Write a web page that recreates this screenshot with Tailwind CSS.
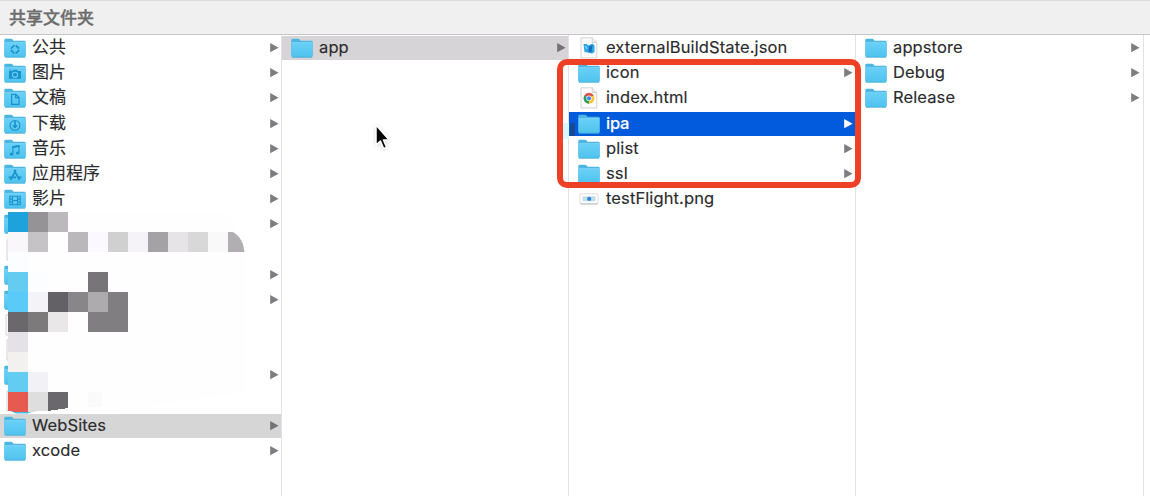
<!DOCTYPE html>
<html lang="zh-CN">
<head>
<meta charset="utf-8">
<title>共享文件夹</title>
<script src="https://cdn.jsdelivr.net/npm/@tailwindcss/browser@4"></script>
</head>
<body class="relative flex h-[496px] w-[1150px] flex-col overflow-hidden bg-white font-['Inter','Noto_Sans_CJK_SC',sans-serif] text-[16.5px] leading-6 tracking-[0.11px] text-[#2b2b2d]">
<svg class="absolute size-0" aria-hidden="true">
  <defs>
    <linearGradient id="fg" x1="0" y1="0" x2="0" y2="1"><stop offset="0" stop-color="#6ad0f7"/><stop offset="1" stop-color="#4ec3ee"/></linearGradient>
    <symbol id="folder" viewBox="0 0 22 20">
      <path d="M0.3 18V2.2Q0.3 0.8 1.6 0.8H7.2Q8 0.8 8.6 1.5L9.6 2.7H20.4Q21.7 2.7 21.7 4V18Z" fill="#4ab5df"/>
      <path d="M0.5 4.6H21.5V18.2Q21.5 19.2 20.5 19.2H1.5Q0.5 19.2 0.5 18.2Z" fill="url(#fg)"/>
      <path d="M0.6 4.4H21.4" stroke="#86dafa" stroke-width=".7"/>
      <path d="M0.8 19.2H21.2" stroke="#42a9d1" stroke-width=".8"/>
    </symbol>
    <symbol id="arrow" viewBox="0 0 9 10"><path d="M0.2 0.1V9.300L8.600 4.700Z" fill="currentColor"/></symbol>
    <symbol id="doc" viewBox="0 0 22 22">
      <path d="M3 .8H14.2L18.8 5.4V21H3Z" fill="#fbfbfb" stroke="#c3c3c3" stroke-width=".7"/>
      <path d="M14.2 .8V5.4H18.8" fill="#ececec" stroke="#c3c3c3" stroke-width=".7"/>
    </symbol>
  </defs>
</svg>

<header class="flex h-[35px] shrink-0 items-center border-t border-b border-t-[#dcdcdc] border-b-[#c6c6c6] bg-[#f0f0f0] pl-[9px] text-[17px] font-medium tracking-normal text-[#6c6c6c] [-webkit-text-stroke:0.35px_#6c6c6c]">共享文件夹</header>

<main class="flex min-h-0 flex-1 [&_span]:pb-0.5 [-webkit-text-stroke:0.15px_currentColor]">
  <!-- shared folders -->
  <section class="relative flex w-[282px] shrink-0 flex-col gap-[1.2px] border-r border-[#e2e2e2] pt-px text-[#2b2b2d]">
    <div class="flex h-6 shrink-0 items-center gap-1.5 pr-[2px] pl-1"><svg class="h-5 w-[22px]" viewBox="0 0 22 20"><use href="#folder"/><path d="M11 6.6 15.8 11.4 11 16.2 6.2 11.4Z" fill="none" stroke="#1a93cc" stroke-width="1.7" stroke-dasharray="4.8 2" stroke-dashoffset="-1"/></svg><span class="flex-1 text-[17px] tracking-normal">公共</span><svg class="h-2.5 w-[9px] text-[#7e7c80]"><use href="#arrow"/></svg></div>
    <div class="flex h-6 shrink-0 items-center gap-1.5 pr-[2px] pl-1"><svg class="h-5 w-[22px]" viewBox="0 0 22 20"><use href="#folder"/><path d="M5 8H8.2L9.2 6.8H13L14 8H17V15.8H5Z" fill="#1a93cc"/><circle cx="11" cy="11.8" r="2.6" fill="#1a93cc" stroke="#6bd0f6" stroke-width="1.1"/><path d="M5.5 7H7.2" stroke="#1a93cc"/></svg><span class="flex-1 text-[17px] tracking-normal">图片</span><svg class="h-2.5 w-[9px] text-[#7e7c80]"><use href="#arrow"/></svg></div>
    <div class="flex h-6 shrink-0 items-center gap-1.5 pr-[2px] pl-1"><svg class="h-5 w-[22px]" viewBox="0 0 22 20"><use href="#folder"/><path d="M7.6 6.3H11.8L15 9.5V16.4H7.6ZM11.6 6.3V9.7H15" fill="none" stroke="#1a93cc" stroke-width="1.2"/></svg><span class="flex-1 text-[17px] tracking-normal">文稿</span><svg class="h-2.5 w-[9px] text-[#7e7c80]"><use href="#arrow"/></svg></div>
    <div class="flex h-6 shrink-0 items-center gap-1.5 pr-[2px] pl-1"><svg class="h-5 w-[22px]" viewBox="0 0 22 20"><use href="#folder"/><circle cx="11" cy="11.4" r="4.9" fill="none" stroke="#1a93cc" stroke-width="1.1"/><path d="M11 7V14" stroke="#1a93cc" stroke-width="1.7"/><path d="M8 11.2H14L11 14.6Z" fill="#1a93cc"/></svg><span class="flex-1 text-[17px] tracking-normal">下载</span><svg class="h-2.5 w-[9px] text-[#7e7c80]"><use href="#arrow"/></svg></div>
    <div class="flex h-6 shrink-0 items-center gap-1.5 pr-[2px] pl-1"><svg class="h-5 w-[22px]" viewBox="0 0 22 20"><use href="#folder"/><path d="M8.9 15V7.8L15 6.6V13.8" fill="none" stroke="#1a93cc" stroke-width="1.1"/><path d="M8.4 7.3 15.5 6V8L8.4 9.3Z" fill="#1a93cc"/><ellipse cx="7.6" cy="15" rx="1.8" ry="1.5" fill="#1a93cc"/><ellipse cx="13.7" cy="13.9" rx="1.8" ry="1.5" fill="#1a93cc"/></svg><span class="flex-1 text-[17px] tracking-normal">音乐</span><svg class="h-2.5 w-[9px] text-[#7e7c80]"><use href="#arrow"/></svg></div>
    <div class="flex h-6 shrink-0 items-center gap-1.5 pr-[2px] pl-1"><svg class="h-5 w-[22px]" viewBox="0 0 22 20"><use href="#folder"/><path d="M10 6 15.5 16M12 6 6.5 16M4.6 13.4H12M14 13.4H17.4" fill="none" stroke="#1a93cc" stroke-width="1.6"/></svg><span class="flex-1 text-[17px] tracking-normal">应用程序</span><svg class="h-2.5 w-[9px] text-[#7e7c80]"><use href="#arrow"/></svg></div>
    <div class="flex h-6 shrink-0 items-center gap-1.5 pr-[2px] pl-1"><svg class="h-5 w-[22px]" viewBox="0 0 22 20"><use href="#folder"/><path d="M5.8 7.3H16.2V15.8H5.8ZM8.5 7.3V15.8M13.5 7.3V15.8M8.5 11.5H13.5M5.8 10.1H8.5M5.8 13H8.5M13.5 10.1H16.2M13.5 13H16.2" fill="none" stroke="#1a93cc" stroke-width="1.1"/></svg><span class="flex-1 text-[17px] tracking-normal">影片</span><svg class="h-2.5 w-[9px] text-[#7e7c80]"><use href="#arrow"/></svg></div>
    <div class="flex h-6 shrink-0 items-center justify-between pr-[2px] pl-1"><svg class="h-5 w-[22px]"><use href="#folder"/></svg><svg class="h-2.5 w-[9px] text-[#7e7c80]"><use href="#arrow"/></svg></div>
    <div class="flex h-6 shrink-0 items-center pl-1"><svg class="h-[22px] w-[22px]"><use href="#doc"/></svg></div>
    <div class="flex h-6 shrink-0 items-center justify-between pr-[2px] pl-1"><svg class="h-5 w-[22px]"><use href="#folder"/></svg><svg class="h-2.5 w-[9px] text-[#7e7c80]"><use href="#arrow"/></svg></div>
    <div class="flex h-6 shrink-0 items-center justify-between pr-[2px] pl-1"><svg class="h-5 w-[22px]"><use href="#folder"/></svg><svg class="h-2.5 w-[9px] text-[#7e7c80]"><use href="#arrow"/></svg></div>
    <div class="flex h-6 shrink-0 items-center pl-[3px]"><svg class="h-[22px] w-[22px]"><use href="#doc"/></svg></div>
    <div class="flex h-6 shrink-0 items-center pl-1"><svg class="h-[22px] w-[22px]"><use href="#doc"/></svg></div>
    <div class="flex h-6 shrink-0 items-center justify-between pr-[2px] pl-1"><svg class="h-5 w-[22px]"><use href="#folder"/></svg><svg class="h-2.5 w-[9px] text-[#7e7c80]"><use href="#arrow"/></svg></div>
    <div class="flex h-6 shrink-0 items-center pl-1"><svg class="h-[22px] w-[22px]"><use href="#doc"/></svg></div>
    <div class="flex h-6 shrink-0 items-center gap-1.5 bg-[#d6d6d6] pr-[2px] pl-1"><svg class="h-5 w-[22px]"><use href="#folder"/></svg><span class="flex-1">WebSites</span><svg class="h-2.5 w-[9px] text-[#737175]"><use href="#arrow"/></svg></div>
    <div class="flex h-6 shrink-0 items-center gap-1.5 pr-[2px] pl-1"><svg class="h-5 w-[22px]"><use href="#folder"/></svg><span class="flex-1">xcode</span><svg class="h-2.5 w-[9px] text-[#7e7c80]"><use href="#arrow"/></svg></div>

    <!-- pixelated cover over private folder names -->
    <svg class="absolute top-[177px] left-2 h-[202px] w-[240px]" viewBox="8 212 240 202" shape-rendering="crispEdges">
      <path d="M8 212H228L245 252V392L110 411.500H8Z" fill="#fefefe"/>
      <path d="M8 212h20v20H8z" fill="#1ea2dc"/><path d="M28 212h20v20H28z" fill="#969396"/><path d="M48 212h20v20H48z" fill="#bbb9bc"/>
      <path d="M8 232h20v20H8z" fill="#f9f7fa"/><path d="M28 232h20v20H28z" fill="#c5c3c6"/><path d="M68 232h20v20H68z" fill="#bbb8bc"/><path d="M88 232h20v20H88z" fill="#fbf9fd"/><path d="M108 232h20v20h-20z" fill="#d0d0d0"/><path d="M128 232h20v20h-20z" fill="#f5f3f7"/><path d="M148 232h20v20h-20z" fill="#a5a2a5"/><path d="M168 232h20v20h-20z" fill="#e6e4e7"/><path d="M188 232h20v20h-20z" fill="#d8d8d8"/><path d="M208 232h20v20h-20z" fill="#f9f9f9"/>
      <path d="M228 232h5q6 3 10 12l1.500 8H228z" fill="#b1afb2" shape-rendering="auto"/>
      <path d="M8 252h20v20H8z" fill="#fcfdff"/><path d="M8 272h20v20H8z" fill="#64cbf1"/><path d="M28 272h20v20H28z" fill="#fcfdff"/><path d="M88 272h20v20H88z" fill="#777577"/>
      <path d="M8 292h20v20H8z" fill="#5acbf8"/><path d="M28 292h20v20H28z" fill="#f4f3f7"/><path d="M48 292h20v20H48z" fill="#636165"/><path d="M68 292h20v20H68z" fill="#888689"/><path d="M88 292h20v20H88z" fill="#adabae"/><path d="M108 292h20v20h-20z" fill="#807e81"/>
      <path d="M8 312h20v20H8z" fill="#6a686b"/><path d="M28 312h20v20H28z" fill="#7c7a7a"/><path d="M48 312h20v20H48z" fill="#e9e7e7"/><path d="M88 312h40v20H88z" fill="#807e81"/>
      <path d="M8 332h20v20H8z" fill="#e4e2e6"/><path d="M8 352h20v20H8z" fill="#f2f1ef"/>
      <path d="M8 372h20v20H8z" fill="#62cdf0"/><path d="M28 372h20v20H28z" fill="#f2f1f5"/>
      <path d="M8 410H36L28 413.500H16Z" fill="#45bce8" shape-rendering="auto"/>
      <path d="M8 392h20v20H16L8 410.500z" fill="#e65a50"/><path d="M28 392h20v18.500l-20 1.500z" fill="#dedede"/><path d="M48 392h20v16l-20 3z" fill="#6a686c"/><path d="M88 392h14v15H88z" fill="#fafafa"/>
    </svg>
  </section>

  <section class="flex w-[287px] shrink-0 flex-col border-r border-[#e2e2e2] pt-px">
    <div class="flex h-6 shrink-0 items-center gap-1.5 bg-[#d6d4d6] pr-[2px] pl-[9px]"><svg class="h-5 w-[22px]"><use href="#folder"/></svg><span class="flex-1">app</span><svg class="h-2.5 w-[9px] text-[#737175]"><use href="#arrow"/></svg></div>
  </section>

  <section class="flex w-[287px] shrink-0 flex-col gap-[1.2px] border-r border-[#e2e2e2] pt-px">
    <div class="flex h-6 shrink-0 items-center gap-1.5 pl-[9px]"><svg class="h-[22px] w-[22px]" viewBox="0 0 22 22"><use href="#doc"/><path d="M5.500 7H8.500L10.500 8.500 14.500 6.500 16.500 8.500V15L14 16.500 9.500 15.500 6.500 15Z" fill="#2ba4e8"/><path d="M11 9.500 14.500 8 13.500 15H10.500Z" fill="#176dba"/><path d="M7.500 9 9 12" stroke="#bce8fb" stroke-width="1"/></svg><span>externalBuildState.json</span></div>
    <div class="flex h-6 shrink-0 items-center gap-1.5 pr-[2px] pl-[9px]"><svg class="h-5 w-[22px]"><use href="#folder"/></svg><span class="flex-1">icon</span><svg class="h-2.5 w-[9px] text-[#7e7c80]"><use href="#arrow"/></svg></div>
    <div class="flex h-6 shrink-0 items-center gap-1.5 pl-[9px]"><svg class="h-[22px] w-[22px]" viewBox="0 0 22 22"><use href="#doc"/><path d="M11 11.300 6.200 8.500A5.500 5.500 0 0 1 15.800 8.500Z" fill="#db5044"/><path d="M11 11.300 15.800 8.500A5.500 5.500 0 0 1 11 16.800Z" fill="#fbc735"/><path d="M11 11.300V16.800A5.500 5.500 0 0 1 6.200 8.500Z" fill="#2c9d58"/><circle cx="11" cy="11.300" r="2.700" fill="#fff"/><circle cx="11" cy="11.300" r="2.100" fill="#4285e8"/></svg><span>index.html</span></div>
    <div class="flex h-6 shrink-0 items-center gap-1.5 bg-[#025bdc] pr-[2px] pl-[9px] text-white"><svg class="h-5 w-[22px]"><use href="#folder"/></svg><span class="flex-1 font-medium tracking-[-0.2px]">ipa</span><svg class="h-2.5 w-[9px]"><use href="#arrow"/></svg></div>
    <div class="flex h-6 shrink-0 items-center gap-1.5 pr-[2px] pl-[9px]"><svg class="h-5 w-[22px]"><use href="#folder"/></svg><span class="flex-1">plist</span><svg class="h-2.5 w-[9px] text-[#7e7c80]"><use href="#arrow"/></svg></div>
    <div class="flex h-6 shrink-0 items-center gap-1.5 pr-[2px] pl-[9px]"><svg class="h-5 w-[22px]"><use href="#folder"/></svg><span class="flex-1">ssl</span><svg class="h-2.5 w-[9px] text-[#7e7c80]"><use href="#arrow"/></svg></div>
    <div class="flex h-6 shrink-0 items-center gap-1.5 pl-[9px]"><svg class="h-[22px] w-[22px]" viewBox="0 0 22 22"><rect x="2" y="6.500" width="18" height="10" rx="1" fill="#b9b9bb"/><rect x="2" y="5.800" width="18" height="9.800" rx="1" fill="#fff" stroke="#cacacc" stroke-width=".7"/><rect x="4.500" y="8.300" width="13" height="5" fill="#c3dbea"/><rect x="9.300" y="9" width="3.800" height="3.800" rx="1" fill="#2487dc"/></svg><span>testFlight.png</span></div>
  </section>

  <section class="flex w-[288px] shrink-0 flex-col gap-[1.2px] border-r border-[#e2e2e2] pt-px">
    <div class="flex h-6 shrink-0 items-center gap-1.5 pr-[3px] pl-[9px]"><svg class="h-5 w-[22px]"><use href="#folder"/></svg><span class="flex-1">appstore</span><svg class="h-2.5 w-[9px] text-[#7e7c80]"><use href="#arrow"/></svg></div>
    <div class="flex h-6 shrink-0 items-center gap-1.5 pr-[3px] pl-[9px]"><svg class="h-5 w-[22px]"><use href="#folder"/></svg><span class="flex-1">Debug</span><svg class="h-2.5 w-[9px] text-[#7e7c80]"><use href="#arrow"/></svg></div>
    <div class="flex h-6 shrink-0 items-center gap-1.5 pr-[3px] pl-[9px]"><svg class="h-5 w-[22px]"><use href="#folder"/></svg><span class="flex-1">Release</span><svg class="h-2.5 w-[9px] text-[#7e7c80]"><use href="#arrow"/></svg></div>
  </section>
</main>

<!-- highlight frame and pointer -->
<div class="absolute top-[123px] left-[563px] h-4 w-1.5 bg-[#d9f7ff]"></div>
<div class="absolute top-[123px] left-[570px] h-[13px] w-[5px] bg-[#174a93]"></div>
<div class="absolute top-[59px] left-[557px] h-[129px] w-[304px] rounded-[10px] border-6 border-[#ee4025]"></div>
<svg class="absolute top-[122px] left-[373px] h-[31px] w-[20px] drop-shadow-sm" viewBox="0 0 20 31"><path d="M3 3V23L7.400 19 10.600 26.600 13.600 25.300 10.400 17.900H16.200Z" fill="#050505" stroke="#fff" stroke-width="1.500" stroke-linejoin="round"/></svg>
</body>
</html>
